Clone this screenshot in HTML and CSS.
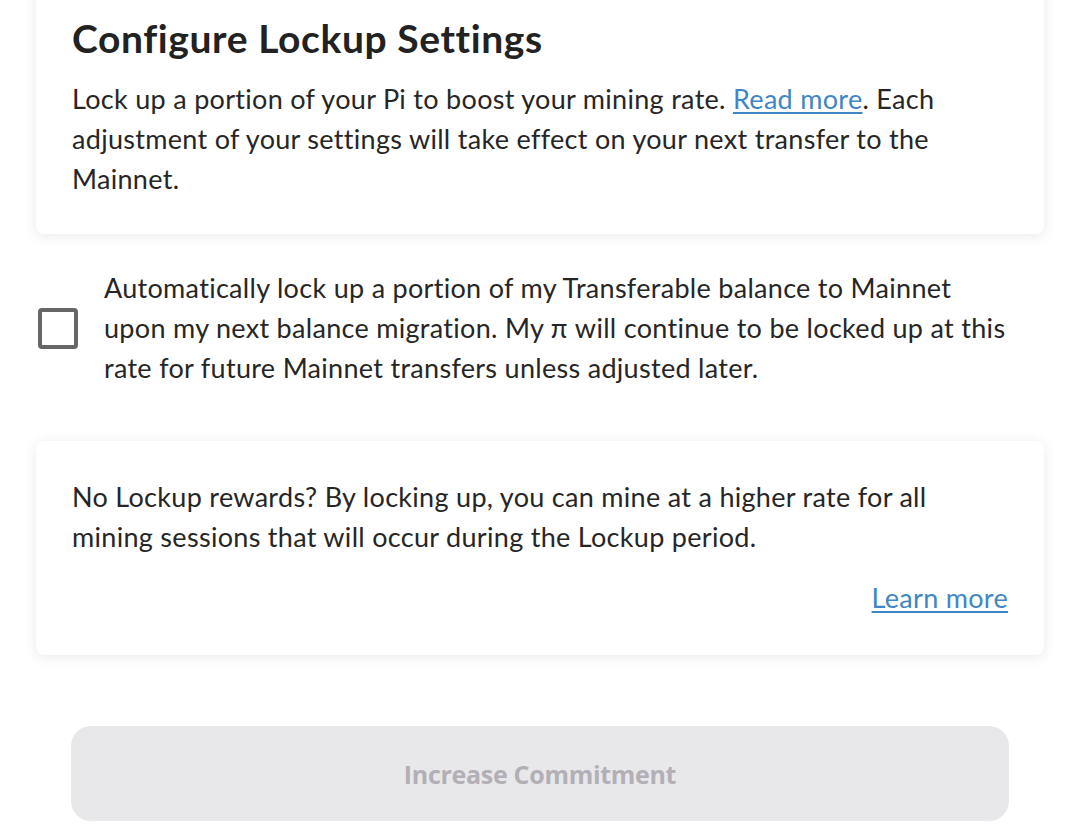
FILE: index.html
```html
<!DOCTYPE html>
<html lang="en">
<head>
<meta charset="utf-8">
<title>Configure Lockup Settings</title>
<link rel="stylesheet" href="styles.css">
</head>
<body>
<main class="page">
  <section class="card intro">
    <h1 class="title">Configure Lockup Settings</h1>
    <p class="text">Lock up a portion of your Pi to boost your mining rate. <a class="link" href="#">Read more</a>. Each adjustment of your settings will take effect on your next transfer to the Mainnet.</p>
  </section>

  <label class="auto-row">
    <span class="checkbox"></span>
    <span class="text auto-text">Automatically lock up a portion of my Transferable balance to Mainnet upon my next balance migration. My π will continue to be locked up at this rate for future Mainnet transfers unless adjusted later.</span>
  </label>

  <section class="card rewards">
    <p class="text">No Lockup rewards? By locking up, you can mine at a higher rate for all mining sessions that will occur during the Lockup period.</p>
    <div class="learn-row"><a class="link" href="#">Learn more</a></div>
  </section>

  <div class="btn-wrap">
    <button class="btn" type="button" disabled>Increase Commitment</button>
  </div>
</main>
</body>
</html>
```

FILE: styles.css
```css
html, body {
  margin: 0;
  padding: 0;
  background: #ffffff;
}
body {
  font-family: "Lato", "Open Sans", sans-serif;
  color: #222222;
  overflow: hidden;
}
.page {
  padding: 0 36px;
  display: flex;
  flex-direction: column;
}
.card {
  background: #ffffff;
  border-radius: 8px;
  box-shadow: 0 2px 14px rgba(0, 0, 0, 0.09);
  padding: 0 36px;
}
.intro {
  margin-top: -30px;
  padding-top: 46px;
  padding-bottom: 35px;
}
.title {
  margin: 0;
  font-size: 39px;
  font-weight: 700;
  line-height: 44px;
  letter-spacing: 0.6px;
  color: #222222;
}
.text {
  margin: 0;
  font-size: 27px;
  line-height: 40px;
  letter-spacing: 0.3px;
  font-weight: 400;
  color: #262626;
}
.intro .text {
  margin-top: 19px;
}
.link {
  color: #3f86c4;
  text-decoration: underline;
  text-underline-offset: 3px;
  text-decoration-thickness: 2px;
}
.auto-row {
  display: flex;
  align-items: center;
  gap: 26px;
  margin-top: 34px;
  padding-left: 2px;
  padding-right: 30px;
}
.checkbox {
  flex: none;
  width: 32px;
  height: 33px;
  border: 4px solid #666666;
  border-radius: 4px;
}
.auto-text {
  flex: 1;
}
.rewards {
  margin-top: 53px;
  padding-top: 36px;
  padding-bottom: 37px;
}
.learn-row {
  display: flex;
  justify-content: flex-end;
  margin-top: 21px;
  font-size: 27px;
  line-height: 40px;
  letter-spacing: 0.3px;
}
.btn-wrap {
  padding: 0 35px;
  margin-top: 71px;
}
.btn {
  width: 100%;
  height: 95px;
  border: none;
  border-radius: 20px;
  background: #e8e8eb;
  color: #b3afb6;
  font-family: "Open Sans", "Lato", sans-serif;
  font-weight: 700;
  font-size: 25px;
  letter-spacing: -0.3px;
}
```
